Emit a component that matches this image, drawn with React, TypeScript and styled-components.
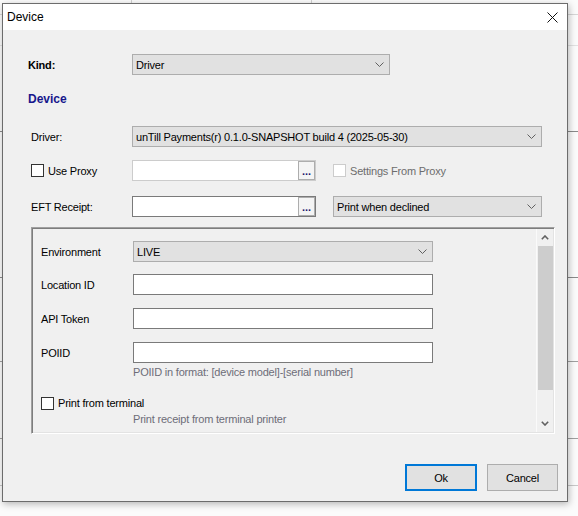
import React from "react";
import styled, { createGlobalStyle } from "styled-components";

const GlobalStyle = createGlobalStyle`
  html, body {
    margin: 0;
    padding: 0;
  }
  body {
    width: 578px;
    height: 516px;
    overflow: hidden;
    font-family: "Liberation Sans", Arial, sans-serif;
    font-size: 11px;
    letter-spacing: -0.2px;
    color: #000;
  }
  * {
    box-sizing: border-box;
  }
`;

// the application window behind the dialog: white sheet with grid lines
const Desktop = styled.div`
  width: 578px;
  height: 516px;
  padding: 3px 0 0 2px;
  background-color: #fbfbfb;
  background-image: linear-gradient(#d6d6d6, #d6d6d6),
    linear-gradient(#e2e2e2, #e2e2e2), linear-gradient(#8a8a8a, #8a8a8a),
    linear-gradient(#8a8a8a, #8a8a8a), linear-gradient(#a0a0a0, #a0a0a0),
    linear-gradient(#a0a0a0, #a0a0a0), linear-gradient(#c8c8c8, #c8c8c8),
    linear-gradient(#d0d0d0, #d0d0d0), linear-gradient(#d0d0d0, #d0d0d0);
  background-repeat: no-repeat;
  background-size: 100% 1px, 100% 1px, 100% 1px, 100% 1px, 100% 1px, 100% 1px,
    100% 1px, 1px 3px, 1px 3px;
  background-position: 0 14px, 0 45px, 0 131px, 0 277px, 0 361px, 0 438px,
    0 485px, 131px 0, 311px 0;
`;

const Dialog = styled.div`
  width: 566px;
  height: 499px;
  border: 1px solid #6c6c6c;
  display: flex;
  flex-direction: column;
  background: #f0f0f0;
  box-shadow: 1px 2px 7px rgba(0, 0, 0, 0.28);
`;

const TitleBar = styled.div`
  height: 26px;
  flex: none;
  background: #fff;
  display: flex;
  align-items: center;
  justify-content: space-between;
  padding: 0 9px 0 4px;
  font-size: 12px;
  letter-spacing: 0;
`;

const CloseIcon = () => (
  <svg width="11" height="11" viewBox="0 0 11 11">
    <path d="M0.5 0.5 L10.5 10.5 M10.5 0.5 L0.5 10.5" stroke="#111" strokeWidth="1" />
  </svg>
);

const Body = styled.div`
  flex: 1;
  display: flex;
  flex-direction: column;
  padding: 24px 9px 10px 25px;
`;

const Row = styled.div<{ $top?: number }>`
  display: flex;
  align-items: center;
  height: 21px;
  margin-top: ${({ $top }) => $top ?? 0}px;
`;

const Label = styled.div<{ $bold?: boolean; $width?: number; $indent?: number }>`
  width: ${({ $width }) => $width ?? 104}px;
  padding-left: ${({ $indent }) => $indent ?? 0}px;
  flex: none;
  font-weight: ${({ $bold }) => ($bold ? 700 : 400)};
  white-space: nowrap;
`;

const Heading = styled.div`
  margin-top: 16px;
  line-height: 16px;
  font-size: 12px;
  font-weight: 700;
  letter-spacing: 0;
  color: #17178c;
`;

const ComboBox = styled.div<{ $width: number }>`
  width: ${({ $width }) => $width}px;
  height: 21px;
  flex: none;
  display: flex;
  align-items: center;
  justify-content: space-between;
  padding: 0 5px 0 3px;
  background: #e1e1e1;
  border: 1px solid #adadad;
  white-space: nowrap;
`;

const Chevron = () => (
  <svg width="9" height="5" viewBox="0 0 9 5">
    <path d="M0.5 0.5 L4.5 4.5 L8.5 0.5" fill="none" stroke="#606060" strokeWidth="1" />
  </svg>
);

// scroll bar arrows are small and heavy
const ScrollChevron = ({ up }: { up?: boolean }) => (
  <svg width="8" height="5" viewBox="0 0 8 5">
    <path
      d={up ? "M0.8 4.2 L4 1 L7.2 4.2" : "M0.8 0.8 L4 4 L7.2 0.8"}
      fill="none"
      stroke="#606060"
      strokeWidth="1.6"
    />
  </svg>
);

const Combo = ({ width, value }: { width: number; value: string }) => (
  <ComboBox $width={width}>
    <span>{value}</span>
    <Chevron />
  </ComboBox>
);

const TextBox = styled.div<{ $width: number; $disabled?: boolean }>`
  width: ${({ $width }) => $width}px;
  height: 21px;
  flex: none;
  display: flex;
  justify-content: flex-end;
  background: #fff;
  border: 1px solid ${({ $disabled }) => ($disabled ? "#cccccc" : "#7a7a7a")};
`;

const EllipsisButton = styled.div`
  width: 17px;
  height: 19px;
  border: 1px solid #adadad;
  background: #f4f4f4;
  color: #1b1b6e;
  font-size: 11px;
  font-weight: 700;
  letter-spacing: 0;
  line-height: 19px;
  text-align: center;
`;

const CheckLabel = styled.label<{ $disabled?: boolean; $width?: number; $indent?: number }>`
  display: flex;
  align-items: center;
  gap: 4px;
  width: ${({ $width }) => ($width ? `${$width}px` : "auto")};
  padding-left: ${({ $indent }) => $indent ?? 0}px;
  flex: none;
  color: ${({ $disabled }) => ($disabled ? "#6d6d6d" : "#000")};
  white-space: nowrap;
`;

const Box = styled.span<{ $disabled?: boolean }>`
  width: 13px;
  height: 13px;
  flex: none;
  background: #fff;
  border: 1px solid ${({ $disabled }) => ($disabled ? "#cccccc" : "#333")};
`;

const Spacer = styled.div<{ $w: number }>`
  width: ${({ $w }) => $w}px;
  flex: none;
`;

const Panel = styled.div`
  margin: 10px 0 0 3px;
  width: 524px;
  height: 207px;
  flex: none;
  display: flex;
  border: 1px solid;
  border-color: #a0a0a0 #ffffff #ffffff #a0a0a0;
  box-shadow: inset 1px 1px 0 #7d7d7d, inset -1px -1px 0 #e3e3e3;
  padding: 1px;
`;

const PanelContent = styled.div`
  flex: 1;
  display: flex;
  flex-direction: column;
  padding: 12px 0 0 8px;
`;

const Hint = styled.div<{ $top: number }>`
  margin: ${({ $top }) => $top}px 0 0 92px;
  line-height: 12px;
  color: #6d6d78;
  white-space: nowrap;
`;

const CheckRow = styled.div`
  margin-top: 18px;
  height: 14px;
  display: flex;
  align-items: center;
`;

const ScrollBar = styled.div`
  width: 17px;
  flex: none;
  display: flex;
  flex-direction: column;
  background: #f0f0f0;
  border-left: 1px solid #fafafa;
`;

const ScrollArrow = styled.div`
  height: 17px;
  flex: none;
  display: flex;
  align-items: center;
  justify-content: center;
`;

const ScrollTrack = styled.div`
  flex: 1;
  display: flex;
  flex-direction: column;
`;

const ScrollThumb = styled.div`
  height: 144px;
  background: #cdcdcd;
  margin-left: 1px;
`;

const Footer = styled.div`
  margin-top: 30px;
  display: flex;
  justify-content: flex-end;
  gap: 10px;
`;

const Button = styled.div<{ $default?: boolean }>`
  width: ${({ $default }) => ($default ? 72 : 71)}px;
  height: 27px;
  display: flex;
  align-items: center;
  justify-content: center;
  background: #e1e1e1;
  border: ${({ $default }) => ($default ? "2px solid #0078d7" : "1px solid #adadad")};
  font-size: 11px;
`;

export default function App() {
  return (
    <Desktop>
      <GlobalStyle />
      <Dialog>
        <TitleBar>
          <span>Device</span>
          <CloseIcon />
        </TitleBar>
        <Body>
          <Row>
            <Label $bold>Kind:</Label>
            <Combo width={258} value="Driver" />
          </Row>
          <Heading>Device</Heading>
          <Row $top={19}>
            <Label $indent={3}>Driver:</Label>
            <Combo width={410} value="unTill Payments(r) 0.1.0-SNAPSHOT build 4 (2025-05-30)" />
          </Row>
          <Row $top={13}>
            <CheckLabel $width={104} $indent={3}>
              <Box />
              Use Proxy
            </CheckLabel>
            <TextBox $width={184} $disabled>
              <EllipsisButton>...</EllipsisButton>
            </TextBox>
            <Spacer $w={17} />
            <CheckLabel $disabled>
              <Box $disabled />
              Settings From Proxy
            </CheckLabel>
          </Row>
          <Row $top={15}>
            <Label $indent={3}>EFT Receipt:</Label>
            <TextBox $width={184}>
              <EllipsisButton>...</EllipsisButton>
            </TextBox>
            <Spacer $w={17} />
            <Combo width={209} value="Print when declined" />
          </Row>
          <Panel>
            <PanelContent>
              <Row>
                <Label $width={92}>Environment</Label>
                <Combo width={300} value="LIVE" />
              </Row>
              <Row $top={12}>
                <Label $width={92}>Location ID</Label>
                <TextBox $width={300} />
              </Row>
              <Row $top={13}>
                <Label $width={92}>API Token</Label>
                <TextBox $width={300} />
              </Row>
              <Row $top={13}>
                <Label $width={92}>POIID</Label>
                <TextBox $width={300} />
              </Row>
              <Hint $top={3}>POIID in format: [device model]-[serial number]</Hint>
              <CheckRow>
                <CheckLabel>
                  <Box />
                  Print from terminal
                </CheckLabel>
              </CheckRow>
              <Hint $top={3}>Print receipt from terminal printer</Hint>
            </PanelContent>
            <ScrollBar>
              <ScrollArrow>
                <ScrollChevron up />
              </ScrollArrow>
              <ScrollTrack>
                <ScrollThumb />
              </ScrollTrack>
              <ScrollArrow>
                <ScrollChevron />
              </ScrollArrow>
            </ScrollBar>
          </Panel>
          <Footer>
            <Button $default>Ok</Button>
            <Button>Cancel</Button>
          </Footer>
        </Body>
      </Dialog>
    </Desktop>
  );
}
